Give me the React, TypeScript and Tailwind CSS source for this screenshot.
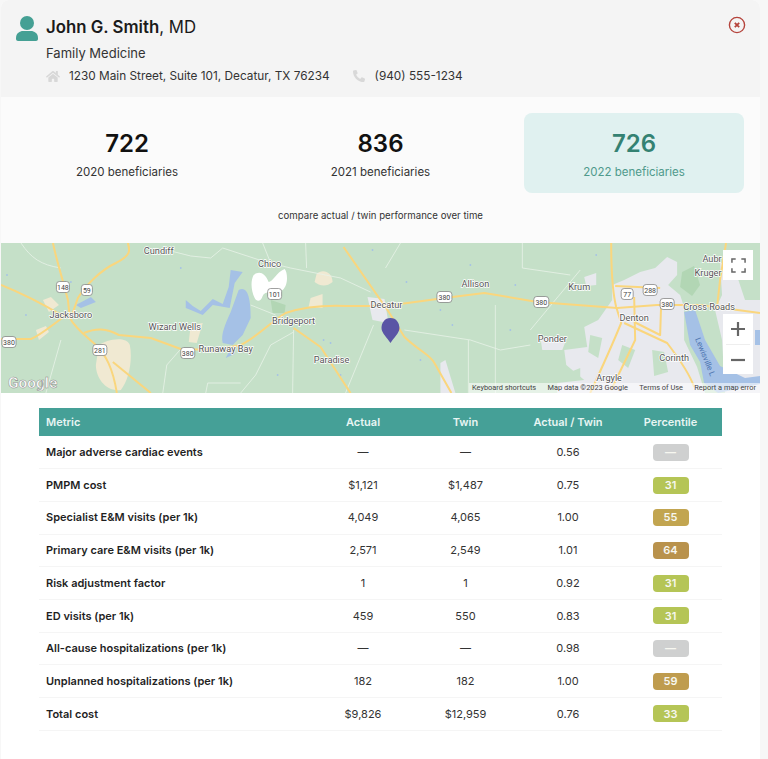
import React from "react";
import { FaHome, FaPhoneAlt } from "react-icons/fa";

const font = { fontFamily: "Inter, 'Liberation Sans', sans-serif" };

type Row = { m: string; a: string; t: string; r: string; p: string; c: string };
const rows: Row[] = [
  { m: "Major adverse cardiac events", a: "—", t: "—", r: "0.56", p: "—", c: "bg-[#cfd0d0]" },
  { m: "PMPM cost", a: "$1,121", t: "$1,487", r: "0.75", p: "31", c: "bg-[#b5c556]" },
  { m: "Specialist E&M visits (per 1k)", a: "4,049", t: "4,065", r: "1.00", p: "55", c: "bg-[#c2a550]" },
  { m: "Primary care E&M visits (per 1k)", a: "2,571", t: "2,549", r: "1.01", p: "64", c: "bg-[#b9924c]" },
  { m: "Risk adjustment factor", a: "1", t: "1", r: "0.92", p: "31", c: "bg-[#b5c556]" },
  { m: "ED visits (per 1k)", a: "459", t: "550", r: "0.83", p: "31", c: "bg-[#b5c556]" },
  { m: "All-cause hospitalizations (per 1k)", a: "—", t: "—", r: "0.98", p: "—", c: "bg-[#cfd0d0]" },
  { m: "Unplanned hospitalizations (per 1k)", a: "182", t: "182", r: "1.00", p: "59", c: "bg-[#bf9c4e]" },
  { m: "Total cost", a: "$9,826", t: "$12,959", r: "0.76", p: "33", c: "bg-[#b5c556]" },
];

const roads = [
  "M0 285 C20 293 40 303 62 316",
  "M52 243 C56 262 62 280 67 300 L69 318 C74 328 85 336 95 345 C105 355 112 368 116 393",
  "M127 243 C129 250 131 255 115 263 C100 270 85 285 77 298 L70 318",
  "M0 339 L30 339 C40 335 50 326 64 316",
  "M83 333 C95 328 105 328 118 335 L150 338 L180 349 L215 350 L240 345 C255 338 270 322 285 313 C300 308 320 305 345 306 L385 306 L444 298 L484 293 L537 302 L617 308 L657 305 L700 305 L760 313",
  "M611 243 C611 270 613 295 616 307 L621 323 C612 345 603 365 590 393",
  "M634 297 L635 340 C628 355 618 375 611 390",
  "M624 323 L667 343 C680 360 690 375 694 387",
  "M726 243 L720 280 L717 307",
  "M343 247 L373 290 L387 310 L404 337 C420 352 430 355 434 363 L451 393",
  "M293 328 L320 347 L350 393",
  "M112 362 L150 393",
  "M615 286 L660 288",
  "M634 322 L660 335 L661 305",
];
const minor = [
  "M20 243 C30 258 40 265 60 268",
  "M170 251 L190 256 L210 258 L222 248 L265 262 L290 268 L340 278 L370 292",
  "M262 243 L272 268",
  "M305 243 L306 268",
  "M250 305 L275 315",
  "M180 349 L166 365 L162 393",
  "M293 332 L270 345 L255 375 L240 393",
  "M293 330 L292 393",
  "M373 325 L345 393",
  "M205 393 L207 383 L240 383",
  "M404 330 L470 340 L500 350 L530 345",
  "M60 340 L45 393",
  "M400 243 L385 268",
  "M522 243 L522 268 L570 275",
  "M580 270 L530 330",
  "M495 305 L495 393",
  "M468 340 L468 393",
];
const dots: [number, number][] = [[6, 275], [70, 282], [25, 315], [180, 268], [330, 343], [323, 340], [277, 375], [372, 250], [340, 375], [406, 282], [440, 310], [452, 325], [515, 285], [510, 330], [420, 360], [596, 255], [470, 265]];

function Shield({ x, y, t, w = 15 }: { x: number; y: number; t: string; w?: number }) {
  return (
    <g>
      <rect x={x - w / 2} y={y - 5.5} width={w} height={11} rx={3} fill="#fff" stroke="#777" strokeWidth={0.7} />
      <text x={x} y={y + 2.6} textAnchor="middle" fontSize={7} fill="#444" fontFamily="Roboto, sans-serif">{t}</text>
    </g>
  );
}

function Place({ x, y, t, s = 9.2 }: { x: number; y: number; t: string; s?: number }) {
  return (
    <text x={x} y={y} textAnchor="middle" fontSize={s} fill="#555" stroke="#fff" strokeWidth={1.4} paintOrder="stroke" fontFamily="Roboto, sans-serif">{t}</text>
  );
}

function MapArt() {
  return (
    <svg viewBox="0 243 760 150" className="absolute inset-0 w-full h-full" preserveAspectRatio="none">
      <rect x="0" y="243" width="760" height="150" fill="#c5e0c8" />
      {/* urban */}
      <path d="M624 280 L640 272 L655 268 L667 257 L677 262 L677 275 L668 285 L680 295 L684 307 L684 340 L697 367 L705 393 L610 393 L557 393 L557 383 L584 380 L566 365 L564 350 L587 347 L584 327 L598 320 L612 300 L612 285 Z" fill="#e8e9ee" />
      <path d="M720 262 L735 270 L745 300 L760 300 L760 393 L725 393 L722 340 L715 310 L722 295 Z M584 277 L596 273 L596 285 L586 286 Z M540 337 L567 337 L562 350 L542 350 Z M367 297 L384 299 L388 323 L372 320 Z M440 363 L445 360 L455 393 L440 393 Z" fill="#e8e9ee" />
      <path d="M590 335 L602 338 L598 358 L588 352 Z M622 345 L635 350 L628 368 L618 360 Z M652 350 L664 352 L668 372 L654 376 Z M570 372 L580 368 L580 378 L572 378 Z" fill="#c5e0c8" />
      <path d="M682 272 L694 266 L700 285 L692 296 L680 287 Z" fill="#b2d6b4" />
      <path d="M270 300 L285 305 L284 313 L272 313 Z" fill="#b2d6b4" />
      {/* beige */}
      <path d="M98 345 C105 340 125 335 129 345 C132 360 128 380 120 390 C105 392 95 378 95 365 Z M190 325 L202 323 L196 343 L188 342 Z M316 274 C322 268 332 272 332 282 C325 288 318 285 314 282 Z M310 298 L322 294 L322 308 L308 307 Z M42 300 L50 297 L58 305 L48 312 Z M35 330 L45 326 L48 332 L38 340 Z" fill="#f0e9d2" />
      {/* water */}
      <path d="M238 290 C246 286 250 295 250 318 L242 335 L232 345 L222 343 C220 335 224 325 230 312 Z M232 345 L225 358 L234 354 Z" fill="#a5c1e6" />
      <path d="M185 300 L192 306 L200 311 L212 299 L222 304 L228 287 L230 270 L242 272 L234 283 L229 308 L212 305 L202 315 L190 310 L185 308 Z" fill="#a5c1e6" />
      <path d="M75 305 L90 297 L95 302 L80 308 Z" fill="#a5c1e6" />
      <path d="M684 312 L695 310 L705 340 L720 366 L745 378 L760 376 L760 384 L718 393 L704 383 L700 362 L690 345 Z M755 330 L760 330 L760 345 L755 345 Z" fill="#a5c1e6" />
      {/* white */}
      <path d="M253 275 C258 271 264 272 268 282 C272 282 276 272 284 269 C287 272 288 285 282 290 C274 294 264 290 262 296 C260 302 256 302 254 298 C250 290 250 280 253 275 Z" fill="#ffffff" />
      {dots.map(([x, y], i) => (
        <circle key={i} cx={x} cy={y} r={0.9} fill="#a5c1e6" />
      ))}
      {minor.map((d, i) => (
        <path key={i} d={d} fill="none" stroke="#e8f3e8" strokeWidth={0.8} />
      ))}
      {roads.map((d, i) => (
        <path key={i} d={d} fill="none" stroke="#fad67d" strokeWidth={2} strokeLinejoin="round" />
      ))}
      <Shield x={62} y={287} t="148" w={13} />
      <Shield x={86} y={290} t="59" w={11} />
      <Shield x={8} y={342} t="380" w={14} />
      <Shield x={99} y={350} t="281" w={14} />
      <Shield x={187} y={353} t="380" w={14} />
      <Shield x={274} y={294} t="101" w={14} />
      <Shield x={444} y={297} t="380" w={15} />
      <Shield x={541} y={302} t="380" w={15} />
      <Shield x={627} y={294} t="77" w={12} />
      <Shield x={650} y={290} t="288" w={14} />
      <Shield x={667} y={304} t="380" w={14} />
      <Place x={158} y={254} t="Cundiff" />
      <Place x={269} y={267} t="Chico" />
      <Place x={70} y={318} t="Jacksboro" />
      <Place x={174} y={330} t="Wizard Wells" />
      <Place x={225} y={352} t="Runaway Bay" />
      <Place x={293} y={324} t="Bridgeport" />
      <Place x={331} y={363} t="Paradise" />
      <Place x={386} y={308} t="Decatur" />
      <Place x={475} y={287} t="Allison" />
      <Place x={579} y={290} t="Krum" />
      <Place x={552} y={342} t="Ponder" />
      <Place x={634} y={321} t="Denton" />
      <Place x={674} y={361} t="Corinth" />
      <Place x={609} y={381} t="Argyle" />
      <Place x={709} y={310} t="Cross Roads" />
      <Place x={712} y={262} t="Aubr" />
      <Place x={708} y={276} t="Kruger" />
      <text x={0} y={0} transform="translate(695 339) rotate(68)" fontSize={8} fill="#4d74b0" fontFamily="Roboto, sans-serif">Lewisville L</text>
      <text x={7} y={388} fontSize={15.5} fontWeight={700} fill="#fff" stroke="#8b8b8b" strokeWidth={0.5} fontFamily="Roboto, sans-serif">Google</text>
      <path d="M390 318 C396 318 399 323 399 328 C399 333 393 338 390 343 C387 338 381 333 381 328 C381 323 384 318 390 318 Z" fill="#5a55a5" />
    </svg>
  );
}

export default function App() {
  return (
    <div className="w-[768px] h-[759px] overflow-hidden bg-[#f7f7f7] text-[#222]" style={font}>
      <div className="ml-px w-[759px] h-[759px] bg-white flex flex-col rounded-t-lg overflow-hidden">
        <header className="relative h-[97px] shrink-0 bg-[#f4f4f4] pt-[16px] pl-[45px]">
          <svg viewBox="0 0 22 25" className="absolute left-[15px] top-[16px] w-[22px] h-[25px]" fill="#45a094">
            <circle cx="11" cy="7" r="7" />
            <path d="M0 22 C0 17 4 15 7 15 L15 15 C18 15 22 17 22 22 L22 23 C22 24 21 25 20 25 L2 25 C1 25 0 24 0 23 Z" />
          </svg>
          <div className="text-[16.8px] leading-[22px] text-[#1a1a1a]">
            <span className="font-semibold">John G. Smith</span>
            <span>, MD</span>
          </div>
          <div className="text-[13px] leading-[18px] mt-[6px] text-[#333]">Family Medicine</div>
          <div className="flex items-center text-[11.8px] leading-[18px] mt-[5px] text-[#333]">
            <FaHome className="w-[14px] h-[13px] text-[#d8d8d8] mr-[9px]" />
            <span>1230 Main Street, Suite 101, Decatur, TX 76234</span>
            <FaPhoneAlt className="w-[12px] h-[12px] text-[#d8d8d8] ml-[23px] mr-[10px]" />
            <span>(940) 555-1234</span>
          </div>
          <svg viewBox="0 0 18 18" className="absolute left-[727px] top-[16px] w-[18px] h-[18px]" fill="none" stroke="#b5443c">
            <circle cx="9" cy="9" r="7.6" strokeWidth="1.4" />
            <path d="M6.8 6.8 L11.2 11.2 M11.2 6.8 L6.8 11.2" strokeWidth="1.8" />
          </svg>
        </header>

        <section className="h-[146px] shrink-0 bg-[#fbfbfb] px-[16px] pt-[16px]">
          <div className="grid grid-cols-3 gap-[33.5px]">
            {[
              ["722", "2020 beneficiaries", false],
              ["836", "2021 beneficiaries", false],
              ["726", "2022 beneficiaries", true],
            ].map(([n, l, active]) => (
              <div
                key={String(n)}
                className={
                  active
                    ? "h-[80px] rounded-lg bg-[#e0f1f0] flex flex-col items-center pt-[17px]"
                    : "h-[80px] rounded-lg flex flex-col items-center pt-[17px]"
                }
              >
                <div className={active ? "text-[24px] leading-[28px] font-semibold text-[#348272]" : "text-[24px] leading-[28px] font-semibold text-[#111]"}>{n}</div>
                <div className={active ? "text-[11.5px] leading-[18px] mt-[5px] text-[#4f9a8c]" : "text-[11.5px] leading-[18px] mt-[5px] text-[#333]"}>{l}</div>
              </div>
            ))}
          </div>
          <div className="text-center text-[9.65px] leading-[14px] mt-[16px] text-[#333]">compare actual / twin performance over time</div>
        </section>

        <section className="relative h-[150px] shrink-0 overflow-hidden">
          <MapArt />
          <div className="absolute left-[722px] top-[7px] w-[30px] h-[30px] bg-white flex items-center justify-center">
            <svg viewBox="0 0 16 16" className="w-[15px] h-[15px]" fill="none" stroke="#666" strokeWidth="1.6">
              <path d="M1 5 V1 H5 M11 1 H15 V5 M15 11 V15 H11 M5 15 H1 V11" />
            </svg>
          </div>
          <div className="absolute left-[722px] top-[71px] w-[30px] h-[60px] bg-white flex flex-col items-center">
            <div className="h-[30px] flex items-center justify-center">
              <svg viewBox="0 0 14 14" className="w-[14px] h-[14px]" stroke="#666" strokeWidth="2.2"><path d="M0 7 H14 M7 0 V14" /></svg>
            </div>
            <div className="w-[24px] h-px bg-[#eee]" />
            <div className="h-[29px] flex items-center justify-center">
              <svg viewBox="0 0 14 14" className="w-[14px] h-[14px]" stroke="#666" strokeWidth="2.2"><path d="M0 7 H14" /></svg>
            </div>
          </div>
          <div className="absolute right-0 bottom-0 h-[10px] w-[291px] bg-[#ffffff90] flex items-center justify-between pl-[3px] pr-[4px] text-[7.4px] text-[#444] whitespace-nowrap" style={{ fontFamily: "Roboto, sans-serif" }}>
            <span>Keyboard shortcuts</span>
            <span>Map data ©2023 Google</span>
            <span>Terms of Use</span>
            <span>Report a map error</span>
          </div>
        </section>

        <section className="pl-[38px] pt-[15px]">
          <table className="w-[683px] table-fixed border-collapse text-[11px]">
            <colgroup>
              <col className="w-[273px]" />
              <col className="w-[102px]" />
              <col className="w-[103px]" />
              <col className="w-[102px]" />
              <col className="w-[103px]" />
            </colgroup>
            <thead>
              <tr className="h-[28px] bg-[#45a097] text-[#e8f5f3] font-semibold">
                <th className="text-left pl-[7px] font-semibold">Metric</th>
                <th className="font-semibold">Actual</th>
                <th className="font-semibold">Twin</th>
                <th className="font-semibold">Actual / Twin</th>
                <th className="font-semibold">Percentile</th>
              </tr>
            </thead>
            <tbody>
              {rows.map((r) => (
                <tr key={r.m} className="h-[32.7px] border-b border-[#f5f5f5]">
                  <td className="pl-[7px] font-semibold text-[#1f1f1f]">{r.m}</td>
                  <td className="text-center text-[#333]">{r.a}</td>
                  <td className="text-center text-[#333]">{r.t}</td>
                  <td className="text-center text-[#333]">{r.r}</td>
                  <td className="text-center">
                    <span className={"mx-auto flex h-[17px] w-[36px] items-center justify-center rounded-[4px] font-semibold text-[#f7f7f0] " + r.c}>{r.p}</span>
                  </td>
                </tr>
              ))}
            </tbody>
          </table>
        </section>
      </div>
    </div>
  );
}
